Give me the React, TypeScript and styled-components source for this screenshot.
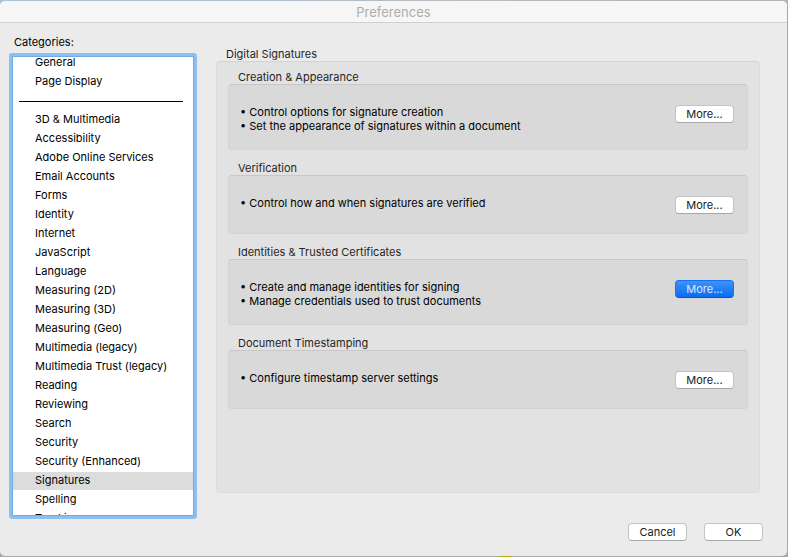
import React, { useLayoutEffect, useRef, useState } from "react";
import styled, { createGlobalStyle } from "styled-components";

const GlobalStyle = createGlobalStyle`
  * { box-sizing: border-box; }
  body {
    margin: 0;
    background: #a6a8aa;
    font-family: "Inter", "Liberation Sans", sans-serif;
    font-size: 11px;
    line-height: 14px;
    color: #000;
  }
`;

const Desktop = styled.div`
  height: 100vh;
  padding: 1px 1px 1px 0;
  display: flex;
  background:
    linear-gradient(90deg, transparent 499px, #b9a900 499px, #b9a900 511px, transparent 511px) bottom / 100% 1px no-repeat,
    linear-gradient(90deg, #a9c3d8, #b4bcc3 50%, #b5b5b5) top / 100% 6px no-repeat;
`;

const Dialog = styled.main`
  flex: 1;
  min-width: 0;
  display: flex;
  flex-direction: column;
  background: #ebebeb;
  border-radius: 5px;
  overflow: hidden;
`;

const TitleBar = styled.h1`
  margin: 0;
  height: 22px;
  flex: none;
  display: flex;
  align-items: center;
  justify-content: center;
  background: #f6f6f6;
  border-bottom: 1px solid #d0d0d0;
  color: #adadad;
  font-size: 13px;
  font-weight: 400;
`;

const Content = styled.div`
  flex: 1;
  min-height: 0;
  display: flex;
  gap: 19px;
  padding: 12px 27px 0 9px;
`;

const Sidebar = styled.section`
  width: 188px;
  flex: none;
  display: flex;
  flex-direction: column;
`;

const SidebarLabel = styled.label`
  padding: 0 5px 4px;
`;

const FocusRing = styled.div`
  flex: 1;
  min-height: 0;
  display: flex;
  background: #fff;
  border: 3px solid #8cc0f0;
  border-radius: 3px;
`;

const List = styled.ul`
  flex: 1;
  margin: 0;
  padding: 0;
  border: 1px solid #70abe3;
  list-style: none;
  overflow: hidden;
  outline: none;
`;

const Option = styled.li<{ $selected: boolean }>`
  height: 18px;
  margin-bottom: 1px;
  padding: 0 22px;
  line-height: 17px;
  white-space: nowrap;
  cursor: default;
  background: ${(p) => (p.$selected ? "#dcdcdc" : "transparent")};
`;

const Divider = styled.li`
  height: 19px;
  padding: 9px 10px 9px 6px;
  background: #000 content-box;
`;

const Pane = styled.section`
  flex: 1;
  min-width: 0;
  display: flex;
  flex-direction: column;
  padding: 12px 0 26px;
`;

const PaneTitle = styled.h2`
  margin: 0;
  padding: 0 10px;
  font-size: 11px;
  font-weight: 400;
  color: #262626;
`;

const PaneBox = styled.div`
  flex: 1;
  display: flex;
  flex-direction: column;
  gap: 11px;
  padding: 8px 11px;
  background: #e2e2e2;
  border: 1px solid #dcdcdc;
  border-top-color: #d2d2d2;
  border-radius: 4px;
`;

const GroupBox = styled.div`
  display: flex;
  align-items: flex-start;
  justify-content: space-between;
  min-height: 59px;
  padding: 20px 13px 16px 11px;
  background: #d9d9d9;
  border: 1px solid #d3d3d3;
  border-top-color: #c8c8c8;
  border-radius: 4px;
`;

const Bullets = styled.ul`
  margin: 0;
  padding: 0;
  list-style: none;

  li::before {
    content: "• ";
  }
`;

const PushButton = styled.button<{ $primary?: boolean }>`
  width: 59px;
  height: 18px;
  padding: 0;
  flex: none;
  font: inherit;
  line-height: 16px;
  color: ${(p) => (p.$primary ? "#d8eaff" : "#1a1a1a")};
  background: ${(p) => (p.$primary ? "linear-gradient(#3f93f8, #0a6cf0)" : "#fff")};
  border: 1px solid ${(p) => (p.$primary ? "#1274f3" : "#c3c3c3")};
  border-bottom-color: ${(p) => (p.$primary ? "#0552d2" : "#a8a8a8")};
  border-radius: 4px;
`;

const Footer = styled.footer`
  display: flex;
  justify-content: flex-end;
  gap: 17px;
  padding: 4px 24px 15px;
`;

const categories = [
  "General",
  "Page Display",
  null,
  "3D & Multimedia",
  "Accessibility",
  "Adobe Online Services",
  "Email Accounts",
  "Forms",
  "Identity",
  "Internet",
  "JavaScript",
  "Language",
  "Measuring (2D)",
  "Measuring (3D)",
  "Measuring (Geo)",
  "Multimedia (legacy)",
  "Multimedia Trust (legacy)",
  "Reading",
  "Reviewing",
  "Search",
  "Security",
  "Security (Enhanced)",
  "Signatures",
  "Spelling",
  "Tracking",
];

const groups = [
  {
    title: "Creation & Appearance",
    lines: ["Control options for signature creation", "Set the appearance of signatures within a document"],
  },
  { title: "Verification", lines: ["Control how and when signatures are verified"] },
  {
    title: "Identities & Trusted Certificates",
    lines: ["Create and manage identities for signing", "Manage credentials used to trust documents"],
    primary: true,
  },
  { title: "Document Timestamping", lines: ["Configure timestamp server settings"] },
];

export default function App() {
  const [selected, setSelected] = useState("Signatures");
  const listRef = useRef<HTMLUListElement>(null);

  useLayoutEffect(() => {
    if (listRef.current) listRef.current.scrollTop = 3;
  }, []);

  return (
    <Desktop>
      <GlobalStyle />
      <Dialog>
        <TitleBar>Preferences</TitleBar>
        <Content>
          <Sidebar>
            <SidebarLabel id="categories-label">Categories:</SidebarLabel>
            <FocusRing>
              <List ref={listRef} role="listbox" tabIndex={0} aria-labelledby="categories-label">
                {categories.map((name) =>
                  name === null ? (
                    <Divider key="divider" role="separator" />
                  ) : (
                    <Option
                      key={name}
                      role="option"
                      aria-selected={name === selected}
                      $selected={name === selected}
                      onClick={() => setSelected(name)}
                    >
                      {name}
                    </Option>
                  )
                )}
              </List>
            </FocusRing>
          </Sidebar>
          <Pane>
            <PaneTitle>Digital Signatures</PaneTitle>
            <PaneBox>
              {groups.map((group) => (
                <section key={group.title}>
                  <PaneTitle as="h3">{group.title}</PaneTitle>
                  <GroupBox>
                    <Bullets>
                      {group.lines.map((line) => (
                        <li key={line}>{line}</li>
                      ))}
                    </Bullets>
                    <PushButton type="button" $primary={group.primary}>
                      More...
                    </PushButton>
                  </GroupBox>
                </section>
              ))}
            </PaneBox>
          </Pane>
        </Content>
        <Footer>
          <PushButton type="button">Cancel</PushButton>
          <PushButton type="button">OK</PushButton>
        </Footer>
      </Dialog>
    </Desktop>
  );
}
